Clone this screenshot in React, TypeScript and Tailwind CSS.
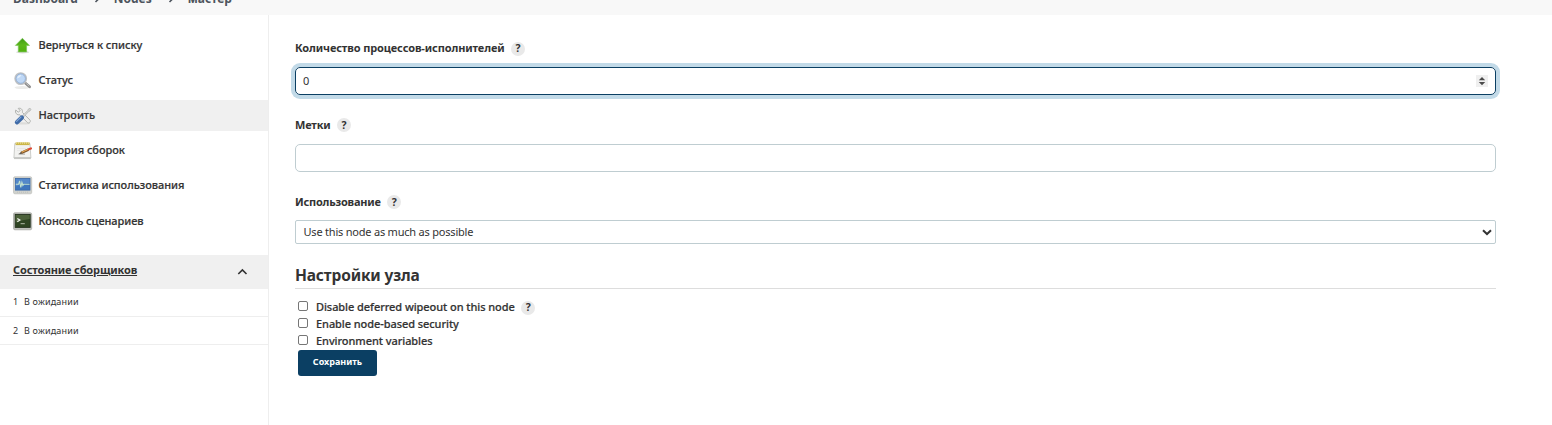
import type { ReactNode } from "react";

const Arrow = () => (
  <svg width="20" height="20" viewBox="0 0 20 20">
    <defs>
      <linearGradient id="gr" x1="0" y1="0" x2="0" y2="1">
        <stop offset="0" stopColor="#3f9a16" />
        <stop offset="0.5" stopColor="#5cb81a" />
        <stop offset="1" stopColor="#52b010" />
      </linearGradient>
    </defs>
    <ellipse cx="9.6" cy="16.2" rx="6.5" ry="1.2" fill="#ddd" />
    <path d="M9.4 2.3 16.5 9.4H13.6V15.9H5.3V9.4H2.4Z" fill="url(#gr)" stroke="#7cc45a" strokeWidth="0.7" strokeLinejoin="round" />
  </svg>
);

const Magnifier = () => (
  <svg width="20" height="20" viewBox="0 0 20 20">
    <ellipse cx="9" cy="16.6" rx="7.5" ry="1.5" fill="#ececea" />
    <path d="M12.2 12 16.6 15.8" stroke="#8e8e8e" strokeWidth="2.8" strokeLinecap="round" />
    <path d="M12.8 12.1 16.7 15.4" stroke="#d2d2d2" strokeWidth="1" strokeDasharray="1 .6" />
    <circle cx="7.7" cy="7.6" r="5.6" fill="#bfd8f6" stroke="#bfc1c3" strokeWidth="1.6" />
    <circle cx="7.7" cy="7.6" r="4.7" fill="none" stroke="#8babd4" strokeWidth="0.8" />
    <path d="M4.2 7.6Q4.2 4.1 8.4 3.9 7.4 6.6 4.2 7.6Z" fill="#e4effc" />
  </svg>
);

const Tools = () => (
  <svg width="20" height="20" viewBox="0 0 20 20">
    <ellipse cx="9.5" cy="17.4" rx="7.5" ry="1.2" fill="#dcdcda" />
    <path d="M2.8 4 5.2 6.2 7.2 4.6 5.2 2.4C7.8 1.6 10 3.6 9.4 6.4L16.9 14C18.3 15.8 16 18 14.2 16.4L7 8.8C4 9.4 1.6 6.8 2.8 4Z" fill="#efefed" stroke="#b2b4b1" strokeWidth="1" />
    <path d="M9 10.2 14.8 4.4 15.2 3.2 17 2.2 18 3.2 17 5 15.8 5.4 10.2 11.4Z" fill="#d4d6d3" stroke="#b0b2b0" strokeWidth="0.7" />
    <path d="M4 16.3 8.8 11.6" stroke="#3f6ba8" strokeWidth="4.4" strokeLinecap="round" />
    <path d="M3.6 15.4 8 11" stroke="#7fa4d4" strokeWidth="1.1" strokeLinecap="round" />
  </svg>
);

const Notepad = () => (
  <svg width="20" height="20" viewBox="0 0 20 20">
    <g transform="translate(0 -0.5)">
      <path d="M1.8 3H17L17.9 17.5H0.9Z" fill="#f2f2f0" stroke="#c0c1be" strokeWidth="0.8" />
      <path d="M1 16.6H17.8V18.6H1Z" fill="#c6c7c4" />
      <path d="M2.6 1.8H16.6V4.6H2.6Z" fill="#cbb648" />
      <path d="M3.4 1.6V3.4M5.4 1.6V3.4M7.4 1.6V3.4M9.4 1.6V3.4M11.4 1.6V3.4M13.4 1.6V3.4M15.4 1.6V3.4" stroke="#efe6a6" strokeWidth="0.7" />
      <path d="M4 8H13M4 10H9" stroke="#dededc" strokeWidth="0.5" />
      <path d="M5.5 13.6H12" stroke="#9c9c9a" strokeWidth="0.9" />
      <path d="M8.2 12.4 15.5 9.1" stroke="#7d5226" strokeWidth="2.6" />
      <path d="M8.2 12 15.3 8.8" stroke="#e5a856" strokeWidth="1.2" />
      <path d="M6 13.5 8.2 11.2 8.9 12.9Z" fill="#3c3328" />
      <path d="M15.8 8.8 17.9 8" stroke="#dd4a35" strokeWidth="2.3" strokeLinecap="round" />
    </g>
  </svg>
);

const Monitor = () => (
  <svg width="20" height="20" viewBox="0 0 20 20">
    <g transform="translate(0 -0.5)">
      <rect x="0.5" y="1.3" width="18.2" height="17" rx="1.4" fill="#d0d2ce" stroke="#bbbdb9" strokeWidth="0.7" />
      <rect x="2.4" y="3" width="14.6" height="11.6" fill="#3f76bd" stroke="#3a68a6" strokeWidth="0.8" />
      <path d="M2.8 3.4H16.6V7.5Q10 7 2.8 11Z" fill="#5488ca" />
      <path d="M2.8 8.8H5.6L6.6 5.4 7.8 12 8.9 6.8 9.9 10 10.7 8.8H16.6" fill="none" stroke="#c3e2cf" strokeWidth="1.1" />
      <path d="M4 16.7H16" stroke="#b6b8b4" strokeWidth="0.7" strokeDasharray="1 1" />
    </g>
  </svg>
);

const Terminal = () => (
  <svg width="20" height="20" viewBox="0 0 20 20">
    <g transform="translate(0 -0.5)">
      <rect x="0.5" y="1.3" width="18.2" height="17" rx="1.4" fill="#bfc1bc" stroke="#a3a59f" strokeWidth="0.7" />
      <rect x="2.2" y="2.9" width="15" height="13" fill="#2f4523" stroke="#26331f" strokeWidth="0.9" />
      <path d="M2.7 3.4H16.7V7.5Q10 8 2.7 11Z" fill="#4c613a" />
      <path d="M4.3 6.9 6.9 8.6 4.3 10.3" fill="none" stroke="#f2f5ef" strokeWidth="1.2" />
      <path d="M7.6 12.2H11.8" stroke="#b3bca9" strokeWidth="1" />
    </g>
  </svg>
);

const Help = () => (
  <span className="ml-[6.5px] flex h-[14px] w-[14px] items-center justify-center rounded-full bg-[#e9e9e9] text-[10.5px] leading-none font-bold text-[#333]">?</span>
);

const Separator = () => (
  <svg width="36" height="10" viewBox="0 0 36 10">
    <path d="M17.5 2 20.5 5 17.5 8" fill="none" stroke="#4d545d" strokeWidth="1.6" />
  </svg>
);

const items: { icon: ReactNode; label: string; box: string }[] = [
  { icon: <Arrow />, label: "Вернуться к списку", box: "h-[31px] mb-1" },
  { icon: <Magnifier />, label: "Статус", box: "h-[31px] mb-1" },
  { icon: <Tools />, label: "Настроить", box: "h-[31px] mb-1 bg-[#f0f0f0]" },
  { icon: <Notepad />, label: "История сборок", box: "h-[31px] mb-1" },
  { icon: <Monitor />, label: "Статистика использования", box: "h-[31px] mb-[5px]" },
  { icon: <Terminal />, label: "Консоль сценариев", box: "h-[31px]" },
];

const checks = [
  { label: "Disable deferred wipeout on this node", help: true },
  { label: "Enable node-based security", help: false },
  { label: "Environment variables", help: false },
];

export default function App() {
  return (
    <div className="flex h-[425px] w-full flex-col overflow-hidden bg-white font-['Noto_Sans',sans-serif] text-[11px] text-[#333]">
      <header className="flex h-[15px] shrink-0 items-start bg-[#f8f8f8]">
        <div className="-mt-[9px] flex h-4 items-center pl-[13px] text-[12px] leading-4 font-bold text-[#4d545d]">
          <span>Dashboard</span>
          <Separator />
          <span>Nodes</span>
          <Separator />
          <span>мастер</span>
        </div>
      </header>
      <div className="flex min-h-0 grow">
        <aside className="w-[269px] shrink-0 border-r border-[#eee] pt-[15px]">
          <nav>
            {items.map((i) => (
              <div key={i.label} className={"flex items-center pl-[13px] " + i.box}>
                {i.icon}
                <span className="ml-[5.5px] font-medium tracking-[-0.05px] whitespace-nowrap [-webkit-text-stroke:0.2px_#333]">{i.label}</span>
              </div>
            ))}
          </nav>
          <div className="mt-[18px] flex h-[34px] items-center bg-[#f0f0f0] pr-[20px] pl-[13px]">
            <span className="-mt-1 font-bold tracking-[-0.14px] underline">Состояние сборщиков</span>
            <svg className="ml-auto" width="12" height="12" viewBox="0 0 12 12">
              <path d="M2.3 8 6.4 3.9 10.5 8" fill="none" stroke="#333" strokeWidth="1.6" />
            </svg>
          </div>
          {[1, 2].map((n) => (
            <div key={n} className={"flex items-center border-b border-[#eee] pl-[13px] text-[9px] " + (n === 1 ? "h-[28px] pt-px pb-[3px]" : "h-[28px]")}>
              <span className="w-[11px]">{n}</span>
              <span className="tracking-[0.18px]">В ожидании</span>
            </div>
          ))}
        </aside>
        <main className="w-[1227px] pt-[26px] pl-[26px]">
          <div className="flex h-[15px] items-center font-bold">
            <span className="tracking-[-0.12px]">Количество процессов-исполнителей</span>
            <Help />
          </div>
          <div className="mt-[11px] flex h-[28px] items-center justify-between rounded-[5px] border border-[#0b3f63] pr-[7px] pl-[7px] ring-4 ring-[#c2dae8]">
            <span>0</span>
            <svg width="12" height="12" viewBox="0 0 12 12">
              <rect width="12" height="12" fill="#efefef" />
              <path d="M6 2 9.2 5.2H2.8ZM6 10.2 2.8 7H9.2Z" fill="#4a4a4a" />
            </svg>
          </div>
          <div className="mt-[23px] flex h-[14px] items-center font-bold">
            <span className="tracking-[-0.2px]">Метки</span>
            <Help />
          </div>
          <div className="mt-[12px] h-[28px] rounded-[5px] border border-[#bfcdd1]" />
          <div className="mt-[23px] flex h-[14px] items-center font-bold">
            <span className="tracking-[-0.21px]">Использование</span>
            <Help />
          </div>
          <div className="mt-[11px] flex h-[24px] items-center justify-between rounded-[2px] border border-[#bfcdd1] pr-[2px] pl-[7.5px]">
            <span className="tracking-[-0.21px]">Use this node as much as possible</span>
            <svg width="12" height="12" viewBox="0 0 12 12">
              <path d="M2 4.2 6 8 10 4.2" fill="none" stroke="#333" strokeWidth="2" />
            </svg>
          </div>
          <h2 className="mt-[20px] flex h-[25px] items-center border-b border-[#ddd] pb-px text-[15.5px] leading-none font-bold tracking-[-0.16px]">Настройки узла</h2>
          <div className="mt-[9px] pt-px">
            {checks.map((c) => (
              <div key={c.label} className="flex h-[17px] items-center pl-[3px]">
                <span className="mr-2 -mt-[3px] h-[10px] w-[10px] rounded-[2px] border border-[#767676] bg-white" />
                <span className="font-medium tracking-[-0.07px] [-webkit-text-stroke:0.2px_#333]">{c.label}</span>
                {c.help && <Help />}
              </div>
            ))}
          </div>
          <button className="ml-[3px] flex h-[26px] w-[79px] items-center justify-center rounded-[3px] bg-[#0b3f63] pb-[2px] text-[9px] font-bold text-white">Сохранить</button>
        </main>
      </div>
    </div>
  );
}
